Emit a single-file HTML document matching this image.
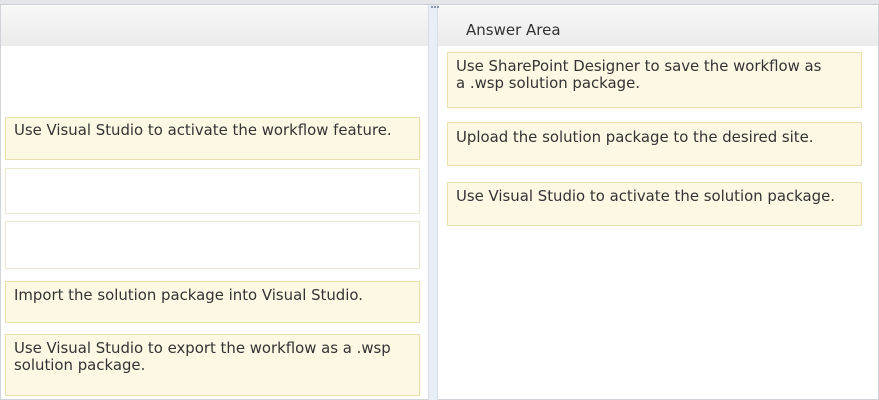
<!DOCTYPE html>
<html><head><style>
body{margin:0;width:879px;height:400px;background:#fff;position:relative;overflow:hidden;font-family:"DejaVu Sans","Liberation Sans",sans-serif;font-size:14.9px;color:#333}
.a{position:absolute;box-sizing:border-box}
.y{background:#fdf8e4;border:1px solid #eadfae;padding:5px 8px;line-height:17px}
.w{background:#fff;border:1px solid #ece6cf}
</style></head><body>
<div class="a" style="left:0;top:0;width:879px;height:5px;background:#e4e6ea;border-bottom:1px solid #c9cdd3"></div>
<div class="a" style="left:0;top:5px;width:879px;height:395px;border:1px solid #d0d3d8;border-top:none"></div>
<div class="a" style="left:1px;top:6px;width:427px;height:40px;background:linear-gradient(#f7f7f7,#ebebeb)"></div>
<div class="a" style="left:438px;top:6px;width:440px;height:40px;background:linear-gradient(#f7f7f7,#ebebeb)"></div>
<div class="a" style="left:428px;top:5px;width:10px;height:395px;background:#e8eef6;border-left:1px solid #d6dde8;border-right:1px solid #d6dde8"></div>
<div class="a" style="left:431px;top:6px;width:8px;height:3px;border-top:2px dotted #8a97aa"></div>
<div class="a" style="left:466px;top:21px;font-size:15px;color:#333">Answer Area</div>
<div class="a y" style="left:447px;top:52px;width:415px;height:56px">Use SharePoint Designer to save the workflow as<br>a .wsp solution package.</div>
<div class="a y" style="left:447px;top:122px;width:415px;height:44px;padding-top:6px">Upload the solution package to the desired site.</div>
<div class="a y" style="left:447px;top:182px;width:415px;height:44px">Use Visual Studio to activate the solution package.</div>
<div class="a y" style="left:5px;top:117px;width:415px;height:43px;padding-top:4px">Use Visual Studio to activate the workflow feature.</div>
<div class="a w" style="left:5px;top:168px;width:415px;height:46px"></div>
<div class="a w" style="left:5px;top:221px;width:415px;height:48px"></div>
<div class="a y" style="left:5px;top:281px;width:415px;height:42px">Import the solution package into Visual Studio.</div>
<div class="a y" style="left:5px;top:334px;width:415px;height:62px">Use Visual Studio to export the workflow as a .wsp<br>solution package.</div>
</body></html>
